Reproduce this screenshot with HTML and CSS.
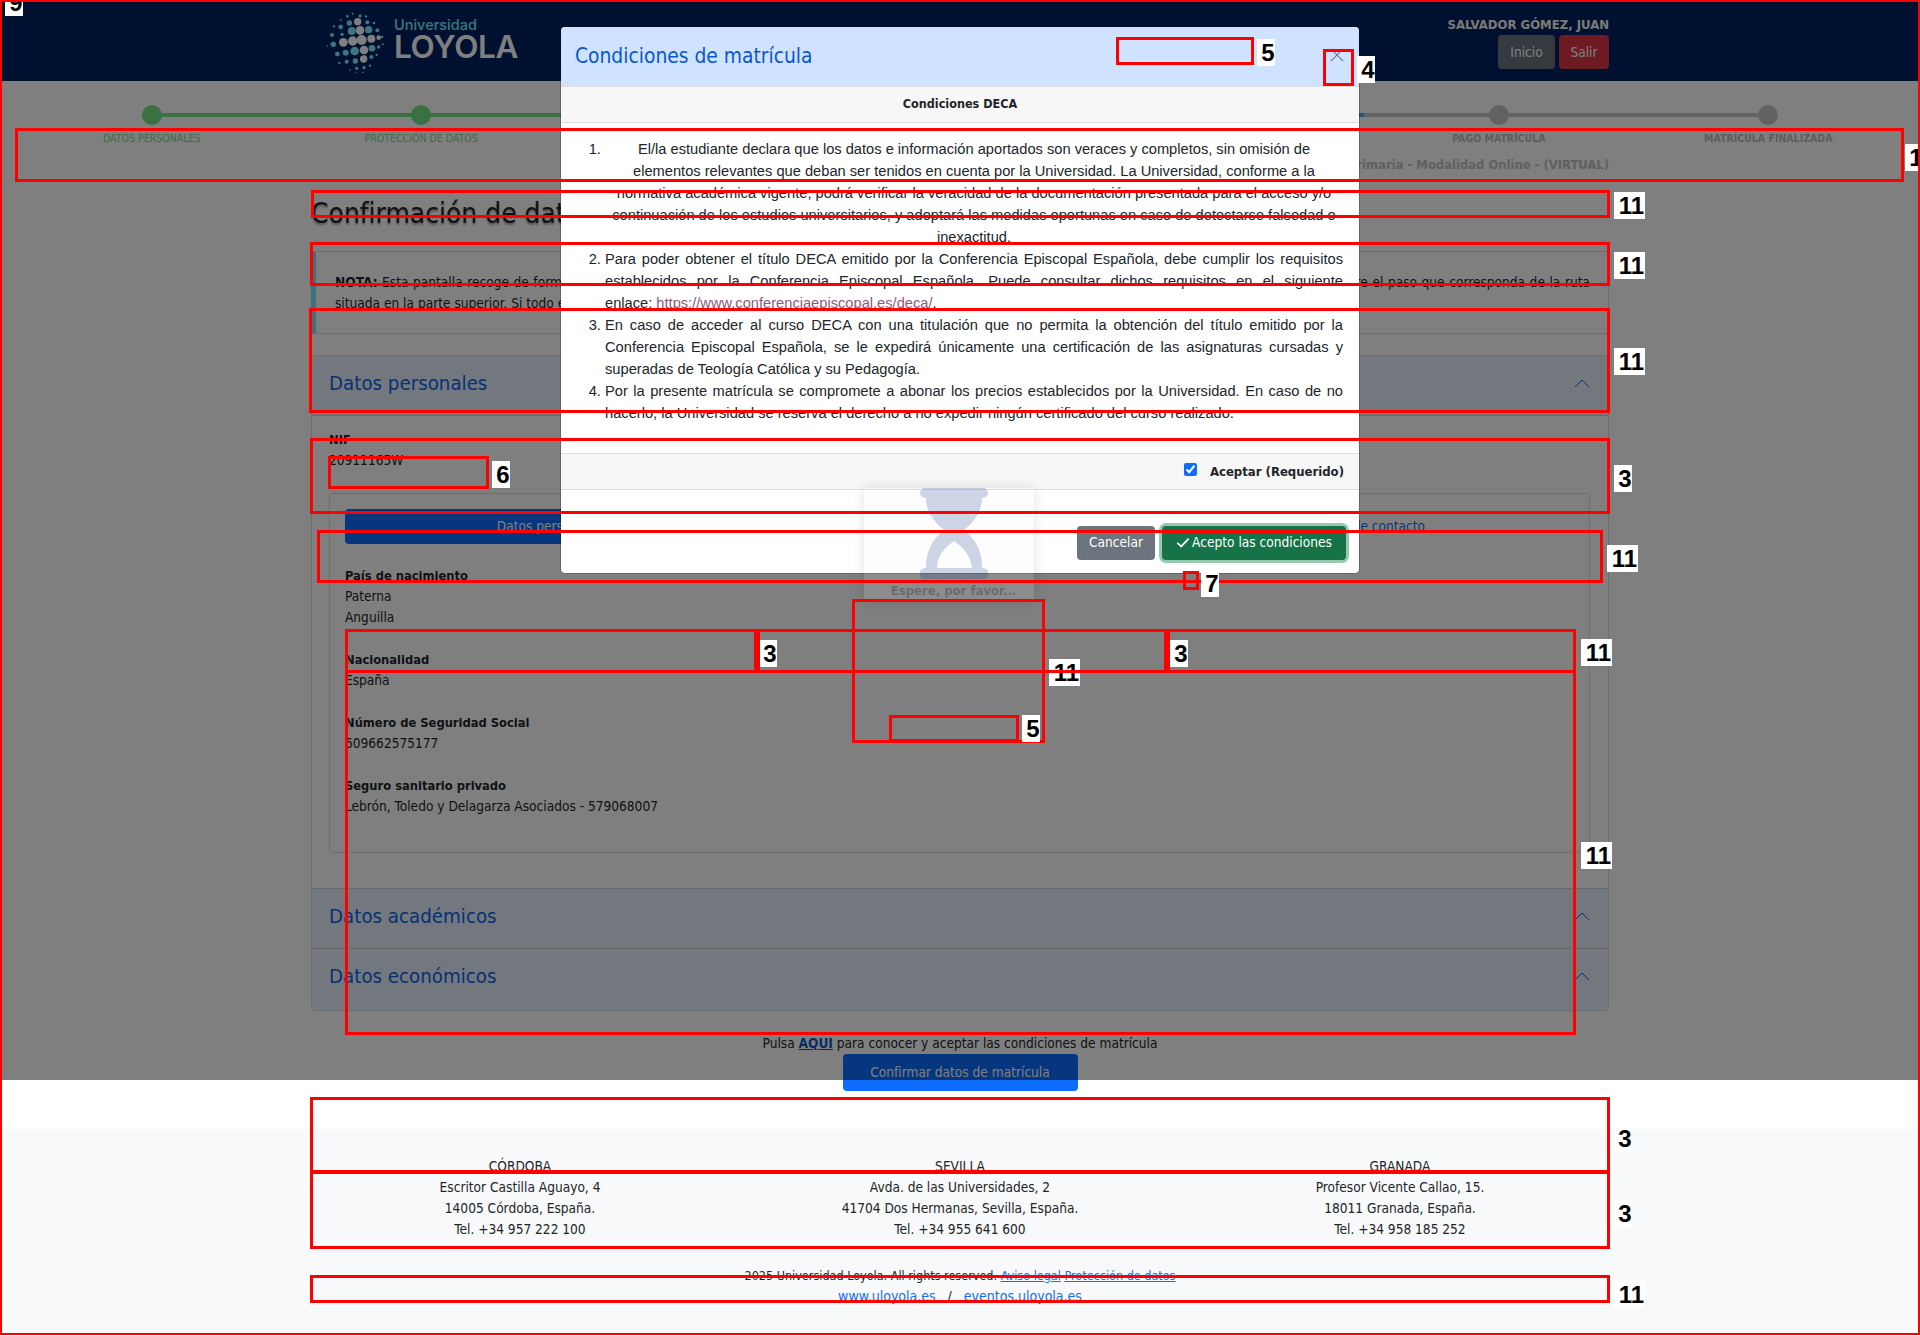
FILE: index.html
```html
<!DOCTYPE html>
<html lang="es">

<head>
    <meta charset="UTF-8">
    <meta name="viewport" content="width=device-width, initial-scale=1.0">
    <title>Confirmación de datos de matrícula</title>
    <link rel="stylesheet" href="styles.css">
</head>

<body>
    <header class="top-bar">
        <div class="container top-inner">
            <a class="logo" href="#">
                <svg class="logo-globe" viewBox="45 28 180 186" aria-hidden="true">
                    <g class="dots-teal">
                        <circle cx="128" cy="36" r="3"/><circle cx="112" cy="44" r="4"/><circle cx="150" cy="43" r="5"/><circle cx="168" cy="44" r="3.5"/>
                        <circle cx="92" cy="54" r="3"/><circle cx="118" cy="64" r="8"/><circle cx="172" cy="62" r="6"/><circle cx="192" cy="64" r="4"/>
                        <circle cx="92" cy="76" r="7"/><circle cx="72" cy="74" r="3.5"/><circle cx="125" cy="88" r="12"/><circle cx="176" cy="84" r="11"/><circle cx="202" cy="86" r="6"/>
                        <circle cx="66" cy="100" r="6"/><circle cx="96" cy="98" r="5"/><circle cx="216" cy="106" r="4"/>
                        <circle cx="70" cy="128" r="8"/><circle cx="52" cy="133" r="2.5"/><circle cx="218" cy="128" r="3"/>
                        <circle cx="82" cy="157" r="7"/><circle cx="107" cy="153" r="9"/><circle cx="134" cy="148" r="13"/><circle cx="186" cy="140" r="10"/><circle cx="206" cy="136" r="5"/>
                        <circle cx="88" cy="184" r="3.5"/><circle cx="110" cy="180" r="6"/><circle cx="136" cy="178" r="8"/><circle cx="184" cy="166" r="6"/><circle cx="200" cy="160" r="3.5"/>
                        <circle cx="120" cy="205" r="2.5"/><circle cx="140" cy="200" r="5"/><circle cx="162" cy="198" r="5"/><circle cx="180" cy="192" r="3.5"/><circle cx="138" cy="213" r="2"/><circle cx="158" cy="212" r="2.5"/>
                    </g>
                    <g class="dots-grey">
                        <circle cx="143" cy="60" r="11"/><circle cx="150" cy="86" r="13"/><circle cx="100" cy="122" r="13"/><circle cx="128" cy="118" r="14"/><circle cx="155" cy="115" r="15"/><circle cx="184" cy="111" r="12"/><circle cx="206" cy="108" r="7"/><circle cx="162" cy="145" r="13"/><circle cx="161" cy="172" r="11"/>
                    </g>
                </svg>
                <span class="logo-text"><span class="logo-small">Universidad</span><span class="logo-big">LOYOLA</span></span>
            </a>
            <div class="user-box">
                <div class="user-name">SALVADOR GÓMEZ, JUAN</div>
                <div class="user-actions">
                    <a class="btn btn-grey" href="#">Inicio</a>
                    <a class="btn btn-red" href="#">Salir</a>
                </div>
            </div>
        </div>
    </header>

    <ol class="steps">
        <li class="step done"><span class="dot"></span><span class="step-label">DATOS PERSONALES</span></li>
        <li class="step done"><span class="dot"></span><span class="step-label">PROTECCIÓN DE DATOS</span></li>
        <li class="step done"><span class="dot"></span><span class="step-label">DATOS ACADÉMICOS</span></li>
        <li class="step done"><span class="dot"></span><span class="step-label">DOCUMENTACIÓN</span></li>
        <li class="step current"><span class="dot"></span><span class="step-label">CONFIRMACIÓN</span></li>
        <li class="step"><span class="dot"></span><span class="step-label">PAGO MATRÍCULA</span></li>
        <li class="step"><span class="dot"></span><span class="step-label">MATRÍCULA FINALIZADA</span></li>
    </ol>

    <main class="container">
        <div class="programme">DECA Educación Infantil y Primaria - Modalidad Online - (VIRTUAL)</div>
        <h1 class="page-title">Confirmación de datos de matrícula</h1>

        <div class="note">
            <p class="note-first"><strong>NOTA:</strong> Esta pantalla recoge de forma resumida los datos de su matrícula. Si desea modificar alguno de los datos que aparecen en esta pantalla, deberá volver sobre el paso que corresponda de la ruta</p>
            <p>situada en la parte superior. Si todo es correcto, confirme los datos de matrícula.</p>
        </div>

        <section class="accordion">
            <div class="acc-head acc-open">
                <span>Datos personales</span>
                <svg class="chevron" viewBox="0 0 16 9"><path d="M1 8 8 1l7 7"/></svg>
            </div>
            <div class="acc-body">
                <div class="field field-nif">
                    <div class="field-name">NIF</div>
                    <div>20911165W</div>
                </div>
                <div class="tab-card">
                    <div class="tabs">
                        <a class="tab tab-on" href="#">Datos personales</a>
                        <a class="tab" href="#">Dirección</a>
                        <a class="tab" href="#">Datos de contacto</a>
                    </div>
                    <div class="field">
                        <div class="field-name">País de nacimiento</div>
                        <div>Paterna</div>
                        <div>Anguilla</div>
                    </div>
                    <div class="field">
                        <div class="field-name">Nacionalidad</div>
                        <div>España</div>
                    </div>
                    <div class="field">
                        <div class="field-name">Número de Seguridad Social</div>
                        <div>609662575177</div>
                    </div>
                    <div class="field">
                        <div class="field-name">Seguro sanitario privado</div>
                        <div>Lebrón, Toledo y Delagarza Asociados - 579068007</div>
                    </div>
                </div>
            </div>
            <div class="acc-head acc-line">
                <span>Datos académicos</span>
                <svg class="chevron" viewBox="0 0 16 9"><path d="M1 8 8 1l7 7"/></svg>
            </div>
            <div class="acc-head acc-line acc-last">
                <span>Datos económicos</span>
                <svg class="chevron" viewBox="0 0 16 9"><path d="M1 8 8 1l7 7"/></svg>
            </div>
        </section>

        <p class="confirm-text">Pulsa <a href="#"><strong>AQUI</strong></a> para conocer y aceptar las condiciones de matrícula</p>
        <div class="confirm-row"><button class="btn btn-blue" type="button">Confirmar datos de matrícula</button></div>
    </main>

    <footer class="site-footer">
        <div class="container">
            <div class="campus-row">
                <div>
                    <div>CÓRDOBA</div>
                    <div>Escritor Castilla Aguayo, 4</div>
                    <div>14005 Córdoba, España.</div>
                    <div>Tel. +34 957 222 100</div>
                </div>
                <div>
                    <div>SEVILLA</div>
                    <div>Avda. de las Universidades, 2</div>
                    <div>41704 Dos Hermanas, Sevilla, España.</div>
                    <div>Tel. +34 955 641 600</div>
                </div>
                <div>
                    <div>GRANADA</div>
                    <div>Profesor Vicente Callao, 15.</div>
                    <div>18011 Granada, España.</div>
                    <div>Tel. +34 958 185 252</div>
                </div>
            </div>
            <div class="legal">2025 Universidad Loyola. All rights reserved. <a href="#">Aviso legal</a> <a href="#">Protección de datos</a></div>
            <div class="sites"><a href="#">www.uloyola.es</a> &nbsp; / &nbsp; <a href="#">eventos.uloyola.es</a></div>
        </div>
    </footer>

    <div class="backdrop"></div>

    <div class="modal">
        <div class="modal-head">
            <span class="modal-title">Condiciones de matrícula</span>
            <svg class="modal-close" viewBox="0 0 16 16"><path d="M1 1l14 14M15 1 1 15"/></svg>
        </div>
        <div class="modal-card">
            <div class="card-head">Condiciones DECA</div>
            <ol class="terms">
                <li class="term-centre">El/la estudiante declara que los datos e información aportados son veraces y completos, sin omisión de elementos relevantes que deban ser tenidos en cuenta por la Universidad. La Universidad, conforme a la normativa académica vigente, podrá verificar la veracidad de la documentación presentada para el acceso y/o continuación de los estudios universitarios, y adoptará las medidas oportunas en caso de detectarse falsedad o inexactitud.</li>
                <li>Para poder obtener el título DECA emitido por la Conferencia Episcopal Española, debe cumplir los requisitos establecidos por la Conferencia Episcopal Española. Puede consultar dichos requisitos en el siguiente <span class="no-break">enlace: <a href="#">https://www.conferenciaepiscopal.es/deca/</a>.</span></li>
                <li>En caso de acceder al curso DECA con una titulación que no permita la obtención del título emitido por la Conferencia Episcopal Española, se le expedirá únicamente una certificación de las asignaturas cursadas y superadas de Teología Católica y su Pedagogía.</li>
                <li>Por la presente matrícula se compromete a abonar los precios establecidos por la Universidad. En caso de no hacerlo, la Universidad se reserva el derecho a no expedir ningún certificado del curso realizado.</li>
            </ol>
            <label class="card-foot"><input type="checkbox" checked> <span>Aceptar (Requerido)</span></label>
        </div>
        <div class="modal-foot">
            <button class="btn btn-slate" type="button">Cancelar</button>
            <button class="btn btn-green" type="button">
                <svg class="check" viewBox="0 0 16 12"><path d="M1.5 6.5 6 10.5 14.5 1.5"/></svg>Acepto las condiciones
            </button>
        </div>
    </div>

    <div class="loading">
        <svg class="hourglass" viewBox="0 0 68 91" aria-hidden="true">
            <path fill-rule="evenodd" d="M5 0H63a5 5 0 0 1 0 10H62C62 22 56 32 44 42C56 52 62 62 62 80H63a5.5 5.5 0 0 1 0 11H5a5.5 5.5 0 0 1 0-11H6C6 62 12 52 24 42C12 32 6 22 6 10H5a5 5 0 0 1 0-10ZM34 53C24 60 17 68 17 80H52C51 68 44 60 34 53Z"/>
        </svg>
        <div class="loading-text">Espere, por favor...</div>
    </div>

    <!-- red review marks of the screenshot -->
    <div class="marks">
        <i class="mark m-steps"></i><b class="tag t-steps">1</b>
        <i class="mark m-title"></i><b class="tag tag-wide t-title">11</b>
        <i class="mark m-note"></i><b class="tag tag-wide t-note">11</b>
        <i class="mark m-acc"></i><b class="tag tag-wide t-acc">11</b>
        <i class="mark m-nif"></i><b class="tag t-nif">3</b>
        <i class="mark m-nifval"></i><b class="tag t-nifval">6</b>
        <i class="mark m-tabs"></i><b class="tag tag-wide t-tabs">11</b>
        <i class="mark m-head5"></i><b class="tag t-head5">5</b>
        <i class="mark m-close"></i><b class="tag t-close">4</b>
        <i class="mark m-seven"></i><b class="tag t-seven">7</b>
        <i class="mark m-mid"></i><b class="tag tag-wide t-mid">11</b>
        <i class="mark m-mid5"></i><b class="tag t-mid5">5</b>
        <i class="mark m-col1"></i><b class="tag t-col1">3</b>
        <i class="mark m-col2"></i><b class="tag t-col2">3</b>
        <i class="mark m-col3"></i><b class="tag tag-wide t-col3">11</b>
        <i class="mark m-big"></i><b class="tag tag-wide t-big">11</b>
        <i class="mark m-foot1"></i><b class="tag t-foot1">3</b>
        <i class="mark m-foot2"></i><b class="tag t-foot2">3</b>
        <i class="mark m-legal"></i><b class="tag tag-wide t-legal">11</b>
        <b class="tag t-page">9</b>
        <i class="mark m-page"></i>
    </div>
</body>

</html>
```

FILE: styles.css
```css
* {
    box-sizing: border-box;
}

body {
    margin: 0;
    min-height: 1335px;
    display: flex;
    flex-direction: column;
    position: relative;
    overflow-x: hidden;
    font-family: "DejaVu Sans Condensed", "DejaVu Sans", sans-serif;
    font-size: 13.6px;
    line-height: 21px;
    color: #212529;
    background: #fff;
}

a {
    color: #0d6efd;
}

.container {
    width: 1320px;
    margin: 0 auto;
    padding: 0 11px;
}

/* top bar */
.top-bar {
    height: 81px;
    background: #002060;
}

.top-inner {
    height: 100%;
    display: flex;
    justify-content: space-between;
    align-items: flex-start;
}

.logo {
    display: flex;
    align-items: flex-start;
    gap: 9px;
    margin: 11px 0 0 14px;
    text-decoration: none;
}

.logo-globe {
    width: 60px;
    height: 62px;
}

.dots-teal {
    fill: #7cecff;
}

.dots-grey {
    fill: #fff;
}

.logo-text {
    display: flex;
    flex-direction: column;
    font-family: Inter, "Liberation Sans", sans-serif;
}

.logo-small {
    font-size: 14.5px;
    line-height: 16px;
    font-weight: 500;
    color: #7cecff;
    margin-top: 6px;
}

.logo-big {
    font-size: 31.5px;
    line-height: 28px;
    font-weight: 600;
    letter-spacing: -0.3px;
    color: #fff;
}

.user-box {
    display: flex;
    flex-direction: column;
    align-items: flex-end;
    padding-top: 14px;
}

.user-name {
    font-size: 13px;
    font-weight: bold;
    color: #f4f4ec;
    line-height: 21px;
}

.user-actions {
    display: flex;
    gap: 4px;
}

.btn {
    display: inline-flex;
    align-items: center;
    justify-content: center;
    height: 34px;
    border: 0;
    border-radius: 4px;
    font: inherit;
    color: #fff;
    text-decoration: none;
}

.btn-grey {
    width: 57px;
    background: #6c757d;
}

.btn-red {
    width: 50px;
    background: #dc3545;
}

.btn-blue {
    width: 235px;
    height: 37px;
    background: #0d6efd;
}

.btn-slate {
    width: 78px;
    padding-bottom: 3px;
    background: #6c757d;
}

.btn-green {
    width: 184px;
    gap: 2px;
    padding-bottom: 3px;
    background: #157347;
    box-shadow: 0 0 0 3px rgba(25, 135, 84, .45);
}

.check {
    width: 14px;
    height: 11px;
    fill: none;
    stroke: #fff;
    stroke-width: 2;
}

/* steps */
.steps {
    display: grid;
    grid-template-columns: repeat(7, 1fr);
    list-style: none;
    margin: 0;
    padding: 24px 17px 0;
}

.step {
    position: relative;
    display: flex;
    flex-direction: column;
    align-items: center;
    color: #b8b8b8;
    font-weight: bold;
}

.step::after {
    content: "";
    position: absolute;
    top: 8px;
    left: 50%;
    width: 100%;
    height: 4px;
    background: #c4c4c4;
}

.step:last-child::after {
    display: none;
}

.step.done {
    color: #76d98a;
    font-weight: normal;
}

.step.done::after {
    background: #76e084;
}

.step.current {
    font-weight: normal;
}

.step.current::after {
    background: linear-gradient(to right, #3ab0ff 50%, #c4c4c4 50%);
}

.dot {
    position: relative;
    width: 20px;
    height: 20px;
    border-radius: 50%;
    background: #c4c4c4;
}

.done .dot {
    background: #76e084;
}

.current .dot {
    background: #3ab0ff;
}

.step-label {
    margin-top: 5px;
    font-size: 10.5px;
    line-height: 16px;
}

/* main */
.programme {
    margin-top: 7px;
    text-align: right;
    font-size: 12.9px;
    font-weight: bold;
    line-height: 24px;
    color: #c0c0c0;
}

.page-title {
    margin: 19px 0 0;
    font-size: 27.9px;
    line-height: 36px;
    font-weight: normal;
    white-space: nowrap;
    text-shadow: 0 2px 2px rgba(0, 0, 0, .35);
}

.note {
    height: 83px;
    margin-top: 19px;
    padding: 20px 18px 0 19px;
    border: 1px solid #ddd;
    border-left: 5px solid #77e4ff;
}

.note p {
    margin: 0;
}

.note-first {
    text-align: justify;
    text-align-last: justify;
}

.accordion {
    margin-top: 21px;
    border: 1px solid #ddd;
    border-radius: 4px;
}

.acc-head {
    height: 60px;
    display: flex;
    align-items: center;
    justify-content: space-between;
    padding: 0 18px 4px 17px;
    background: #e7f1ff;
    font-size: 20.3px;
    color: #0c63e4;
}

.acc-open {
    height: 59px;
}

.acc-last {
    height: 62px;
    padding-bottom: 6px;
}

.acc-line {
    border-top: 1px solid #ccc;
}

.chevron {
    width: 16px;
    height: 9px;
    fill: none;
    stroke: #0c63e4;
    stroke-width: 1;
}

.acc-body {
    padding: 13px 18px 35px 17px;
    border-top: 1px solid #ccc;
}

.field {
    margin-bottom: 21px;
}

.field-nif {
    margin-bottom: 22px;
}

.field-name {
    font-size: 12.8px;
    font-weight: bold;
}

.tab-card {
    padding: 15px 15px 14px;
    border: 1px solid #ddd;
    border-radius: 4px;
}

.tabs {
    display: grid;
    grid-template-columns: repeat(3, 1fr);
    margin-bottom: 21px;
}

.tab {
    height: 35px;
    line-height: 35px;
    text-align: center;
    text-decoration: none;
    border-radius: 4px;
}

.tab-on {
    background: #0d6efd;
    color: #fff;
}

.confirm-text {
    margin: 22px 0 0;
    text-align: center;
}

.confirm-text a {
    color: #0a58ca;
}

.confirm-row {
    display: flex;
    justify-content: center;
}

/* footer */
.site-footer {
    flex: 1;
    margin-top: 38px;
    padding-top: 27px;
    background: #f8f9fa;
    text-align: center;
}

.campus-row {
    display: grid;
    grid-template-columns: repeat(3, 1fr);
    margin: 0 -11px 25px;
}

.legal {
    font-size: 12.5px;
}

.sites {
    font-size: 14px;
}

/* modal, on top of the page */
.backdrop {
    position: absolute;
    z-index: 2;
    top: 0;
    left: 0;
    width: 1920px;
    height: 1080px;
    background: rgba(0, 0, 0, .5);
}

.modal {
    position: absolute;
    z-index: 2;
    top: 26px;
    left: 560px;
    width: 800px;
    height: 548px;
    display: flex;
    flex-direction: column;
    border: 1px solid rgba(0, 0, 0, .2);
    border-radius: 5px;
    background: #fff;
    background-clip: padding-box;
    overflow: hidden;
}

.modal-head {
    height: 59px;
    flex: none;
    display: flex;
    align-items: center;
    justify-content: space-between;
    padding: 0 15px 0 14px;
    background: #cfe2ff;
}

.modal-title {
    font-size: 20.8px;
    color: #0a58ca;
}

.modal-close {
    width: 14px;
    height: 14px;
    margin-bottom: 4px;
    fill: none;
    stroke: #6b7a8c;
    stroke-width: 1.4;
}

.modal-card {
    height: 404px;
    flex: none;
    display: flex;
    flex-direction: column;
    border-top: 1px solid #ddd;
    border-bottom: 1px solid #ddd;
}

.card-head {
    height: 36px;
    flex: none;
    line-height: 34px;
    text-align: center;
    font-size: 12.5px;
    font-weight: bold;
    background: #f7f7f7;
    border-bottom: 1px solid #ddd;
}

.terms {
    flex: 1;
    margin: 0;
    padding: 15px 16px 0 44px;
    font-family: "Liberation Sans", Arial, sans-serif;
    font-size: 14.67px;
    line-height: 22px;
    text-align: justify;
}

.term-centre {
    text-align: center;
}

.no-break {
    white-space: nowrap;
}

.terms a {
    color: #8f5878;
    text-decoration: none;
}

.card-foot {
    height: 36px;
    flex: none;
    display: flex;
    align-items: center;
    justify-content: flex-end;
    gap: 13px;
    padding-right: 15px;
    font-size: 13px;
    font-weight: bold;
    background: #f7f7f7;
    border-top: 1px solid #ddd;
}

.card-foot input {
    width: 13px;
    height: 13px;
    margin: 0 0 4px;
    accent-color: #0d6efd;
}

.modal-foot {
    flex: 1;
    display: flex;
    justify-content: flex-end;
    align-items: flex-start;
    gap: 7px;
    margin-top: 21px;
    padding: 14px 13px 0 0;
    border-top: 1px solid #dee2e6;
}

.loading {
    position: absolute;
    z-index: 2;
    top: 488px;
    left: 864px;
    width: 170px;
    height: 114px;
    padding-left: 9px;
    display: flex;
    flex-direction: column;
    align-items: center;
    background: rgba(235, 240, 248, .12);
    box-shadow: 0 0 12px rgba(0, 0, 0, .12);
}

.hourglass {
    width: 68px;
    height: 91px;
    flex: none;
    fill: rgba(13, 50, 130, .2);
}

.loading-text {
    margin-top: 1px;
    font-size: 13px;
    font-weight: bold;
    color: rgba(60, 65, 75, .45);
}

/* review marks */
.marks {
    position: absolute;
    z-index: 2;
    top: 0;
    left: 0;
    width: 1920px;
    height: 1335px;
    overflow: hidden;
    pointer-events: none;
}

.mark {
    position: absolute;
    border: 3px solid #f00;
}

.tag {
    position: absolute;
    width: 18px;
    height: 27px;
    padding-left: 4px;
    background: #fff;
    color: #000;
    font: bold 24px/27px "Liberation Sans", Arial, sans-serif;
    text-align: center;
}

.tag-wide {
    width: 31px;
}

.m-page { left: 0; top: 0; width: 1920px; height: 1335px; border-width: 2px; }
.m-steps { left: 15px; top: 128px; width: 1889px; height: 54px; }
.m-title { left: 311px; top: 190px; width: 1299px; height: 28px; }
.m-note { left: 310px; top: 242px; width: 1300px; height: 44px; }
.m-acc { left: 309px; top: 308px; width: 1301px; height: 105px; }
.m-nif { left: 310px; top: 438px; width: 1300px; height: 76px; }
.m-nifval { left: 328px; top: 456px; width: 161px; height: 33px; }
.m-tabs { left: 317px; top: 530px; width: 1286px; height: 53px; }
.m-head5 { left: 1116px; top: 37px; width: 138px; height: 28px; }
.m-close { left: 1323px; top: 49px; width: 31px; height: 37px; }
.m-seven { left: 1183px; top: 571px; width: 16px; height: 19px; }
.m-mid { left: 852px; top: 599px; width: 193px; height: 144px; }
.m-mid5 { left: 889px; top: 715px; width: 130px; height: 27px; }
.m-col1 { left: 345px; top: 629px; width: 412px; height: 44px; }
.m-col2 { left: 757px; top: 629px; width: 410px; height: 44px; }
.m-col3 { left: 1167px; top: 629px; width: 409px; height: 44px; }
.m-big { left: 345px; top: 670px; width: 1231px; height: 365px; }
.m-foot1 { left: 310px; top: 1097px; width: 1300px; height: 76px; }
.m-foot2 { left: 310px; top: 1171px; width: 1300px; height: 78px; }
.m-legal { left: 310px; top: 1275px; width: 1300px; height: 28px; }

.t-page { left: 5px; top: -11px; }
.t-steps { left: 1905px; top: 144px; }
.t-title { left: 1614px; top: 192px; }
.t-note { left: 1614px; top: 252px; }
.t-acc { left: 1614px; top: 348px; }
.t-nif { left: 1614px; top: 465px; }
.t-nifval { left: 492px; top: 461px; }
.t-tabs { left: 1607px; top: 545px; }
.t-head5 { left: 1257px; top: 39px; }
.t-close { left: 1357px; top: 56px; }
.t-seven { left: 1201px; top: 570px; }
.t-mid { left: 1049px; top: 659px; }
.t-mid5 { left: 1022px; top: 715px; }
.t-col1 { left: 759px; top: 640px; }
.t-col2 { left: 1170px; top: 640px; }
.t-col3 { left: 1581px; top: 639px; }
.t-big { left: 1581px; top: 842px; }
.t-foot1 { left: 1614px; top: 1125px; }
.t-foot2 { left: 1614px; top: 1200px; }
.t-legal { left: 1614px; top: 1281px; }
```
